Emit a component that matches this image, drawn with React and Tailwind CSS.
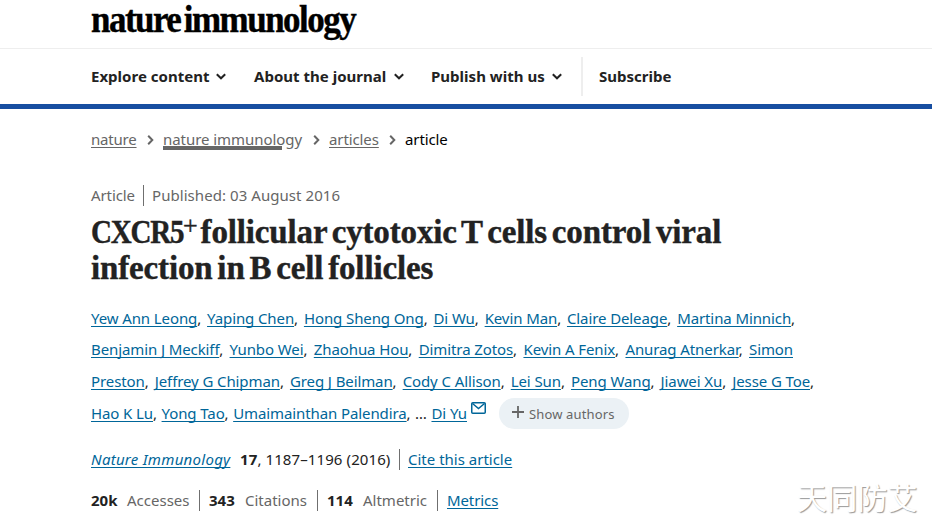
import React from 'react';

const authorRows = [
  {
    width: 'w-[704px]',
    names: ['Yew Ann Leong', 'Yaping Chen', 'Hong Sheng Ong', 'Di Wu', 'Kevin Man', 'Claire Deleage', 'Martina Minnich'],
  },
  {
    width: 'w-[702px]',
    names: ['Benjamin J Meckiff', 'Yunbo Wei', 'Zhaohua Hou', 'Dimitra Zotos', 'Kevin A Fenix', 'Anurag Atnerkar', 'Simon'],
  },
  {
    width: 'w-[723px]',
    names: ['Preston', 'Jeffrey G Chipman', 'Greg J Beilman', 'Cody C Allison', 'Lei Sun', 'Peng Wang', 'Jiawei Xu', 'Jesse G Toe'],
  },
];

const linkClass = 'text-[#006699] underline decoration-1 underline-offset-2 [text-decoration-skip-ink:none]';

const ChevronDown = () => (
  <svg className="w-[10px] h-[7px] mt-[2px]" viewBox="0 0 10 7" fill="none" stroke="#222" strokeWidth="2">
    <path d="M0.8 1.2 L5 5.3 L9.2 1.2" />
  </svg>
);

const ChevronRight = () => (
  <svg className="w-[7px] h-[10px] mt-[2px]" viewBox="0 0 7 10" fill="none" stroke="#666" strokeWidth="2">
    <path d="M1.2 0.8 L5.3 5 L1.2 9.2" />
  </svg>
);

const MailIcon = () => (
  <svg className="w-[15px] h-[12px]" viewBox="0 0 15 12" fill="none" stroke="#006699" strokeWidth="1.5">
    <rect x="0.75" y="0.75" width="13.5" height="10.5" rx="1" />
    <path d="M1.5 1.5 L7.5 6.6 L13.5 1.5" />
  </svg>
);

const Divider = () => <span className="w-px h-[21px] bg-[#6f6f6f]" />;

const NavItem = ({ label, width }) => (
  <a href="#" className="flex items-center">
    <span className={width}>{label}</span>
    <ChevronDown />
  </a>
);

const Author = ({ name, comma = true }) => (
  <span>
    <a href="#" className={linkClass}>{name}</a>
    {comma && ','}
  </span>
);

const Metric = ({ value, label, width }) => (
  <div className="flex">
    <b className="w-[36px] tracking-[0]">{value}</b>
    <span className={`text-[#666] tracking-[0] ${width}`}>{label}</span>
  </div>
);

const App = () => {
  return (
    <div className="relative w-[932px] h-[532px] overflow-hidden bg-white text-[#222] text-[15px] leading-6 tracking-[-0.1px] whitespace-nowrap font-['Noto_Sans',sans-serif]">
      {/* Journal header */}
      <header className="border-b-[5px] border-[#174ea1]">
        <div className="h-[49px] pl-[91px] border-b border-[#eee]">
          <div className="w-max origin-left scale-x-[0.945] font-['Liberation_Serif',serif] font-bold text-[37px] leading-[39px] tracking-[-1.6px] [word-spacing:-4px] [-webkit-text-stroke:0.4px_black] text-black">
            nature immunology
          </div>
        </div>
        <nav className="h-[55px] pl-[91px] pb-[2px] flex items-center font-bold tracking-[0.02px]">
          <NavItem label="Explore content" width="w-[125px]" />
          <div className="ml-7"><NavItem label="About the journal" width="w-[140px]" /></div>
          <div className="ml-[27px]"><NavItem label="Publish with us" width="w-[121px]" /></div>
          <span className="ml-[19px] mt-[2px] w-[2px] h-[39px] bg-[#eee]" />
          <a href="#" className="ml-4">Subscribe</a>
        </nav>
      </header>

      <main className="pl-[91px]">
        {/* Breadcrumbs */}
        <div className="flex items-center mt-[18px] text-[#666]">
          <a href="#" className="w-[56px] underline underline-offset-2 tracking-[-0.2px]">nature</a>
          <ChevronRight />
          <a href="#" className="relative ml-[9px] w-[150px] tracking-[-0.05px]">
            nature immunology
            <span className="absolute left-0 top-[19px] w-[119px] h-1 bg-[#666]" />
          </a>
          <ChevronRight />
          <a href="#" className="ml-[9px] w-[60px] underline underline-offset-2">articles</a>
          <ChevronRight />
          <span className="ml-[9px] text-black">article</span>
        </div>

        <div className="flex items-center mt-8 text-[#666]">
          <span className="w-[52px]">Article</span>
          <Divider />
          <span className="ml-2 tracking-[0.06px]">Published: 03 August 2016</span>
        </div>

        <h1 className="mt-[7px] font-['Liberation_Serif',serif] font-bold text-[33px] leading-[36px] tracking-[-0.15px] [word-spacing:-3.2px] [-webkit-text-stroke:0.4px_#222]">
          <span className="inline-block w-[92px] origin-left scale-x-[0.88] tracking-[-1.4px]">CXCR5</span>
          <sup className="relative -top-[9px] text-[26px] leading-none align-baseline font-normal tracking-[-2px]">+</sup> follicular cytotoxic T cells control viral
          <br />
          infection in B cell follicles
        </h1>

        {/* Authors */}
        <div className="mt-4">
          {authorRows.map((row, i) => (
            <div key={i} className={`flex justify-between h-[31.6px] items-center ${row.width}`}>
              {row.names.map((name) => (
                <Author key={name} name={name} comma={name !== 'Simon'} />
              ))}
            </div>
          ))}
          <div className="flex items-center h-[31.6px]">
            <div className="flex justify-between w-[376px]">
              <Author name="Hao K Lu" />
              <Author name="Yong Tao" />
              <Author name="Umaimainthan Palendira" />
              <span>…</span>
              <Author name="Di Yu" comma={false} />
            </div>
            <div className="ml-1 mb-[10px]"><MailIcon /></div>
            <button className="ml-[13px] mt-[2px] w-[130px] h-[31px] rounded-full bg-[#ebf1f5] text-[#666] text-[13px] tracking-[0.15px] flex items-center pl-[13px]">
              <svg className="w-3 h-3 mr-[5px] mb-[3px]" viewBox="0 0 12 12" stroke="#666" strokeWidth="1.8">
                <path d="M6 0V12M0 6H12" />
              </svg>
              Show authors
            </button>
          </div>
        </div>

        <div className="flex items-center mt-[19px]">
          <a href="#" className={`italic w-[149px] tracking-[0.27px] ${linkClass}`}>Nature Immunology</a>
          <span className="w-[159px] tracking-[0.1px]"><b>17</b>, 1187–1196 (2016)</span>
          <Divider />
          <a href="#" className={`ml-2 tracking-[0] ${linkClass}`}>Cite this article</a>
        </div>

        <div className="flex items-center mt-[17px]">
          <Metric value="20k" label="Accesses" width="w-[72px]" />
          <Divider />
          <div className="ml-[9px]"><Metric value="343" label="Citations" width="w-[72px]" /></div>
          <Divider />
          <div className="ml-[9px]"><Metric value="114" label="Altmetric" width="w-[74px]" /></div>
          <Divider />
          <a href="#" className={`ml-[9px] ${linkClass}`}>Metrics</a>
        </div>
      </main>

      {/* Watermark */}
      <div className="absolute left-[797px] top-[478px] text-[30px] leading-[36px] tracking-[0.2px] text-white font-['Noto_Sans_CJK_SC',sans-serif] [text-shadow:1px_1px_1px_#999]">
        天同防艾
      </div>
    </div>
  );
};

export default App;
